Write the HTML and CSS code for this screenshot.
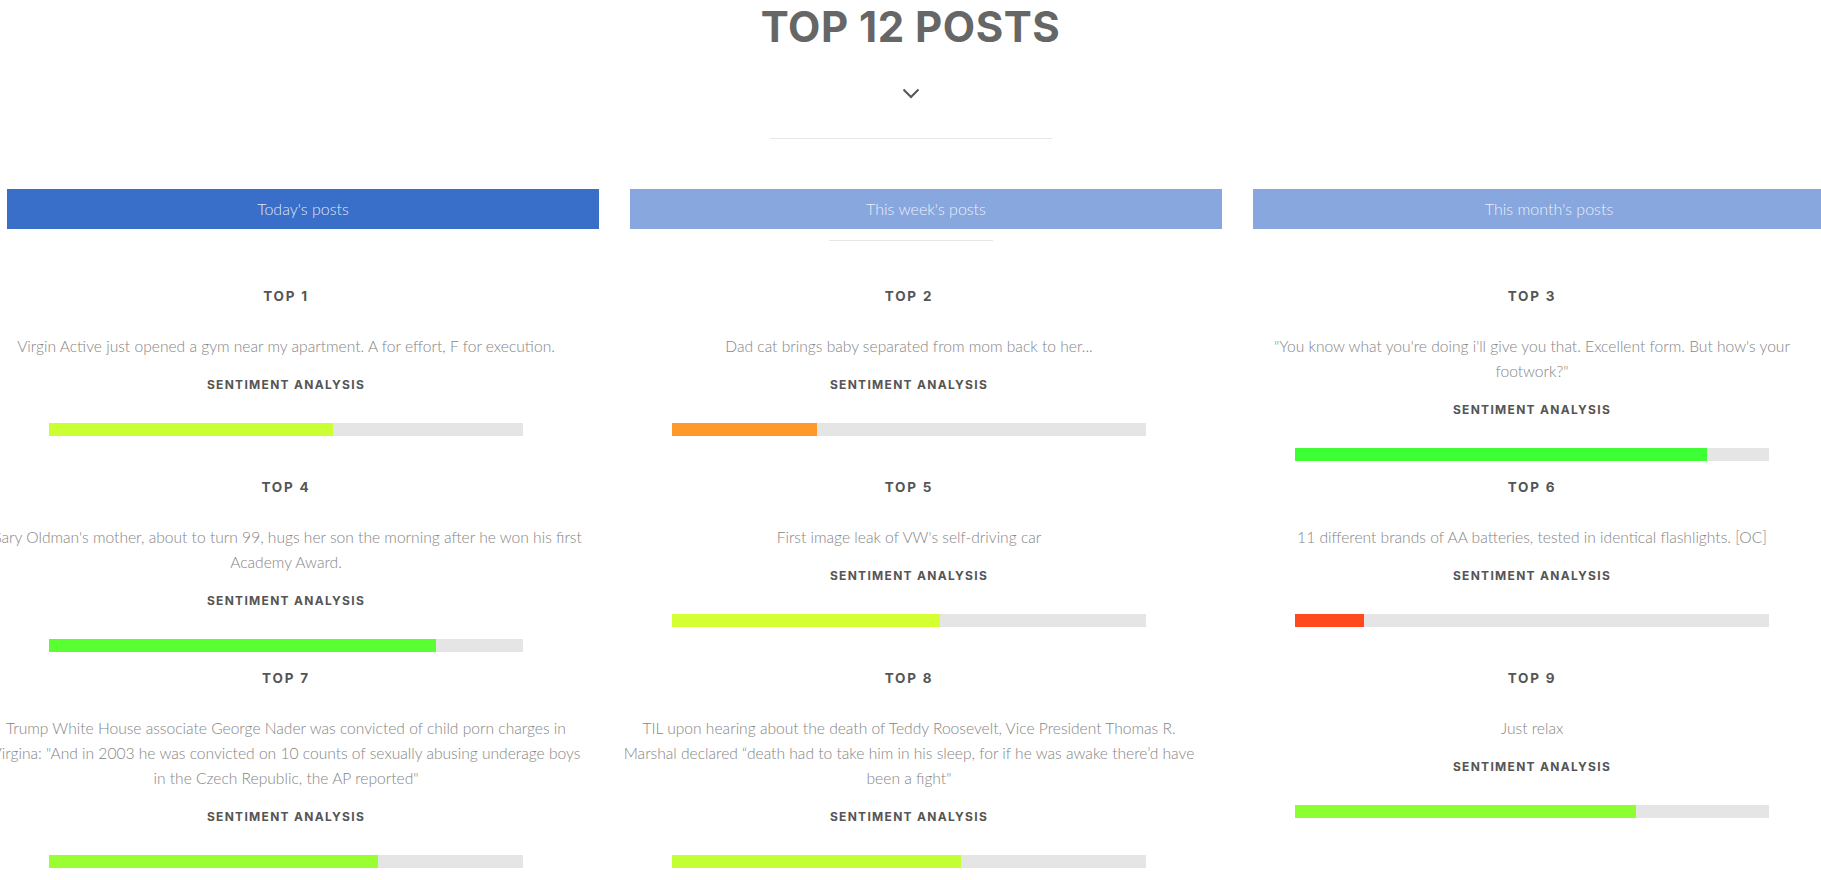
FILE: index.html
```html
<!DOCTYPE html>
<html lang="en">
<head>
<meta charset="utf-8">
<title>Top 12 posts</title>
<link rel="stylesheet" href="styles.css">
</head>
<body>
<header class="hero">
  <h1 class="hero-title">TOP 12 POSTS</h1>
  <svg class="chevron" width="18" height="11" viewBox="0 0 18 11" aria-hidden="true">
    <polyline points="1.5,1.5 9,9 16.5,1.5" fill="none" stroke="#555" stroke-width="2"/>
  </svg>
  <div class="divider"></div>
</header>

<nav class="tabs">
  <div class="tab tab-active">Today's posts</div>
  <div class="tab">This week's posts</div>
  <div class="tab">This month's posts</div>
</nav>
<div class="divider divider-small"></div>

<main class="posts">
  <article class="post">
    <h3 class="post-rank">TOP 1</h3>
    <p class="post-text">Virgin Active just opened a gym near my apartment. A for effort, F for execution.</p>
    <h4 class="post-sub">SENTIMENT ANALYSIS</h4>
    <div class="bar"><div class="bar-fill" style="width:60%;background:#c9ff33"></div></div>
  </article>
  <article class="post">
    <h3 class="post-rank">TOP 2</h3>
    <p class="post-text">Dad cat brings baby separated from mom back to her...</p>
    <h4 class="post-sub">SENTIMENT ANALYSIS</h4>
    <div class="bar"><div class="bar-fill" style="width:30.5%;background:#ff992a"></div></div>
  </article>
  <article class="post">
    <h3 class="post-rank">TOP 3</h3>
    <p class="post-text">"You know what you're doing i'll give you that. Excellent form. But how's your footwork?"</p>
    <h4 class="post-sub">SENTIMENT ANALYSIS</h4>
    <div class="bar"><div class="bar-fill" style="width:87%;background:#3dff33"></div></div>
  </article>

  <article class="post">
    <h3 class="post-rank">TOP 4</h3>
    <p class="post-text">Gary Oldman's mother, about to turn 99, hugs her son the morning after he won his first Academy Award.</p>
    <h4 class="post-sub">SENTIMENT ANALYSIS</h4>
    <div class="bar"><div class="bar-fill" style="width:81.7%;background:#5aff33"></div></div>
  </article>
  <article class="post">
    <h3 class="post-rank">TOP 5</h3>
    <p class="post-text">First image leak of VW's self-driving car</p>
    <h4 class="post-sub">SENTIMENT ANALYSIS</h4>
    <div class="bar"><div class="bar-fill" style="width:56.5%;background:#d4ff33"></div></div>
  </article>
  <article class="post">
    <h3 class="post-rank">TOP 6</h3>
    <p class="post-text">11 different brands of AA batteries, tested in identical flashlights. [OC]</p>
    <h4 class="post-sub">SENTIMENT ANALYSIS</h4>
    <div class="bar"><div class="bar-fill" style="width:14.5%;background:#ff4a1e"></div></div>
  </article>

  <article class="post">
    <h3 class="post-rank">TOP 7</h3>
    <p class="post-text">Trump White House associate George Nader was convicted of child porn charges in Virgina: "And in 2003 he was convicted on 10 counts of sexually abusing underage boys in the Czech Republic, the AP reported"</p>
    <h4 class="post-sub">SENTIMENT ANALYSIS</h4>
    <div class="bar"><div class="bar-fill" style="width:69.5%;background:#99ff33"></div></div>
  </article>
  <article class="post">
    <h3 class="post-rank">TOP 8</h3>
    <p class="post-text">TIL upon hearing about the death of Teddy Roosevelt, Vice President Thomas R.<br>Marshal declared “death had to take him in his sleep, for if he was awake there’d have been a fight"</p>
    <h4 class="post-sub">SENTIMENT ANALYSIS</h4>
    <div class="bar"><div class="bar-fill" style="width:61%;background:#c3ff33"></div></div>
  </article>
  <article class="post">
    <h3 class="post-rank">TOP 9</h3>
    <p class="post-text">Just relax</p>
    <h4 class="post-sub">SENTIMENT ANALYSIS</h4>
    <div class="bar"><div class="bar-fill" style="width:72%;background:#8cff33"></div></div>
  </article>
</main>
</body>
</html>
```

FILE: styles.css
```css
html, body {
  overflow-x: hidden;
}

body {
  margin: 0;
  background: #ffffff;
  font-family: "Lato", "Open Sans", sans-serif;
  color: #777;
}

.hero {
  display: flex;
  flex-direction: column;
  align-items: center;
}

.hero-title {
  margin: 0;
  font-family: "Inter", "DejaVu Sans", sans-serif;
  font-weight: 700;
  font-size: 42px;
  line-height: 54px;
  letter-spacing: 0.5px;
  color: #666;
}

.chevron {
  display: block;
  margin-top: 34px;
}

.divider {
  width: 282px;
  height: 1px;
  background: #e6e6e6;
  margin-top: 39px;
}

.tabs {
  display: grid;
  grid-template-columns: repeat(3, 592px);
  column-gap: 31px;
  margin-top: 50px;
  margin-left: 7px;
}

.tab {
  height: 40px;
  line-height: 40px;
  text-align: center;
  font-family: "Lato Light", "Lato", sans-serif;
  font-weight: 300;
  font-size: 16px;
  color: rgba(255, 255, 255, 0.85);
  background: #87a7de;
}

.tab-active {
  background: #3a6fc9;
}

.divider-small {
  width: 164px;
  margin: 11px auto 0;
}

.posts {
  display: grid;
  grid-template-columns: repeat(3, 592px);
  column-gap: 31px;
  row-gap: 16px;
  margin-top: 45px;
  margin-left: -10px;
}

.post {
  display: flex;
  flex-direction: column;
  align-items: center;
  text-align: center;
}

.post-rank {
  margin: 0;
  font-family: "Inter", "DejaVu Sans", sans-serif;
  font-weight: 700;
  font-size: 13.5px;
  line-height: 20px;
  letter-spacing: 1.8px;
  color: #555;
}

.post-text {
  margin: 28px 0 0;
  font-family: "Lato Light", "Lato", sans-serif;
  font-weight: 300;
  font-size: 15.6px;
  line-height: 25px;
  color: #858585;
}

.post-sub {
  margin: 16px 0 0;
  font-family: "Inter", "DejaVu Sans", sans-serif;
  font-weight: 700;
  font-size: 12px;
  line-height: 20px;
  letter-spacing: 1.3px;
  color: #555;
}

.bar {
  width: 80%;
  height: 13px;
  margin-top: 28px;
  background: #e5e5e5;
}

.bar-fill {
  height: 100%;
}
```
